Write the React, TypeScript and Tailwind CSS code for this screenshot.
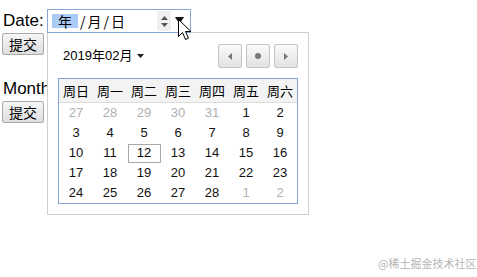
import React from "react";

const weekdays = ["周日", "周一", "周二", "周三", "周四", "周五", "周六"];

// 2019年02月 的格子，前后补上相邻月份
const days: { n: number; other?: boolean; today?: boolean }[] = [
  { n: 27, other: true }, { n: 28, other: true }, { n: 29, other: true }, { n: 30, other: true }, { n: 31, other: true },
  ...Array.from({ length: 28 }, (_, i) => ({ n: i + 1, today: i + 1 === 12 })),
  { n: 1, other: true }, { n: 2, other: true },
];

function NavButton({ children }: { children: React.ReactNode }) {
  return (
    <div className="w-[24px] h-[24px] border border-[#c4c4c4] rounded-[2px] bg-gradient-to-b from-[#fafafa] to-[#e2e2e2] flex items-center justify-center">
      {children}
    </div>
  );
}

function SubmitButton() {
  return (
    <div className="w-[42px] h-[22px] border border-[#a9a9a9] rounded-[2px] bg-gradient-to-b from-[#f6f6f6] to-[#dedede] flex items-center justify-center text-[14px] text-black font-['Noto_Sans_CJK_SC',sans-serif]">
      提交
    </div>
  );
}

export default function App() {
  return (
    <div className="relative w-[477px] h-[277px] bg-white overflow-hidden font-['Liberation_Sans','Noto_Sans_CJK_SC',sans-serif] text-black">
      <div className="pl-[2px] pt-[9px]">
        <div className="flex items-center h-[24px]">
          <span className="text-[17px] ml-[1px] w-[44px]">Date:</span>
          <div className="relative z-10 w-[144px] h-[24px] border border-[#86a6d6] bg-white flex items-center">
            <div className="ml-[4px] w-[26px] h-[14px] bg-[#a9cbf5] flex items-center justify-center text-[14px] font-['Noto_Sans_CJK_SC',sans-serif]">
              年
            </div>
            <div className="flex items-center text-[14px] font-['Noto_Sans_CJK_SC',sans-serif]">
              <span className="ml-[2px]">/</span>
              <span className="ml-[2px]">月</span>
              <span className="ml-[2px]">/</span>
              <span className="ml-[2px]">日</span>
            </div>
            <div className="ml-auto mr-[19px] w-[14px] h-[20px] bg-[#f0f0f0] flex flex-col items-center justify-center gap-[3px]">
              <svg width="7" height="4" viewBox="0 0 7 4"><path d="M3.5 0 7 4H0z" fill="#555" /></svg>
              <svg width="7" height="4" viewBox="0 0 7 4"><path d="M0 0h7L3.5 4z" fill="#555" /></svg>
            </div>
            <svg className="absolute left-[127px] top-[7px]" width="9" height="7" viewBox="0 0 9 7">
              <path d="M0 0h9L4.5 7z" fill="#111" />
            </svg>
          </div>
        </div>
        <SubmitButton />
        <div className="flex items-center h-[24px] mt-[22px]">
          <span className="text-[17px] ml-[1px]">Month</span>
        </div>
        <SubmitButton />
      </div>

      {/* 日历弹层 */}
      <div className="absolute left-[47px] top-[32px] w-[262px] h-[183px] border border-[#cfcfcf] bg-white px-[10px] pt-[11px]">
        <div className="flex items-center justify-between h-[24px]">
          <div className="flex items-center pl-[5px] text-[13px]">
            <span>2019年02月</span>
            <svg className="ml-[5px]" width="7" height="4" viewBox="0 0 7 4"><path d="M0 0h7L3.5 4z" fill="#222" /></svg>
          </div>
          <div className="flex gap-[4px]">
            <NavButton>
              <svg width="4" height="7" viewBox="0 0 4 7"><path d="M4 0v7L0 3.5z" fill="#777" /></svg>
            </NavButton>
            <NavButton>
              <div className="w-[6px] h-[6px] rounded-full bg-[#777]" />
            </NavButton>
            <NavButton>
              <svg width="4" height="7" viewBox="0 0 4 7"><path d="M0 0v7L4 3.5z" fill="#777" /></svg>
            </NavButton>
          </div>
        </div>

        <div className="mt-[10px] w-[240px] border border-[#7fa3da]">
          <div className="grid grid-cols-7 h-[24px] bg-[#f3f3f3] border-b border-[#dcdcdc] text-[13px] font-['Noto_Sans_CJK_SC',sans-serif]">
            {weekdays.map((w) => (
              <div key={w} className="flex items-center justify-center">{w}</div>
            ))}
          </div>
          <div className="grid grid-cols-7 text-[13px]">
            {days.map((d, i) => (
              <div key={i} className="h-[20px] flex items-center justify-center">
                {d.today ? (
                  <div className="w-[33px] h-[19px] border border-[#a8a8a8] flex items-center justify-center">{d.n}</div>
                ) : (
                  <span className={d.other ? "text-[#b0b0b0]" : "text-[#111]"}>{d.n}</span>
                )}
              </div>
            ))}
          </div>
        </div>
      </div>

      {/* 鼠标指针 */}
      <svg className="absolute left-[178px] top-[19px] z-20" width="14" height="22" viewBox="0 0 14 22">
        <path d="M0.5 0.5v17l4-4 3 7 3-1.3-3-6.7h5.5z" fill="#fff" stroke="#000" strokeWidth="1" strokeLinejoin="round" />
      </svg>

      <div className="absolute left-[378px] top-[255px] text-[11px] text-[#b5b5b5] font-['Noto_Sans_CJK_SC',sans-serif]">
        @稀土掘金技术社区
      </div>
    </div>
  );
}
